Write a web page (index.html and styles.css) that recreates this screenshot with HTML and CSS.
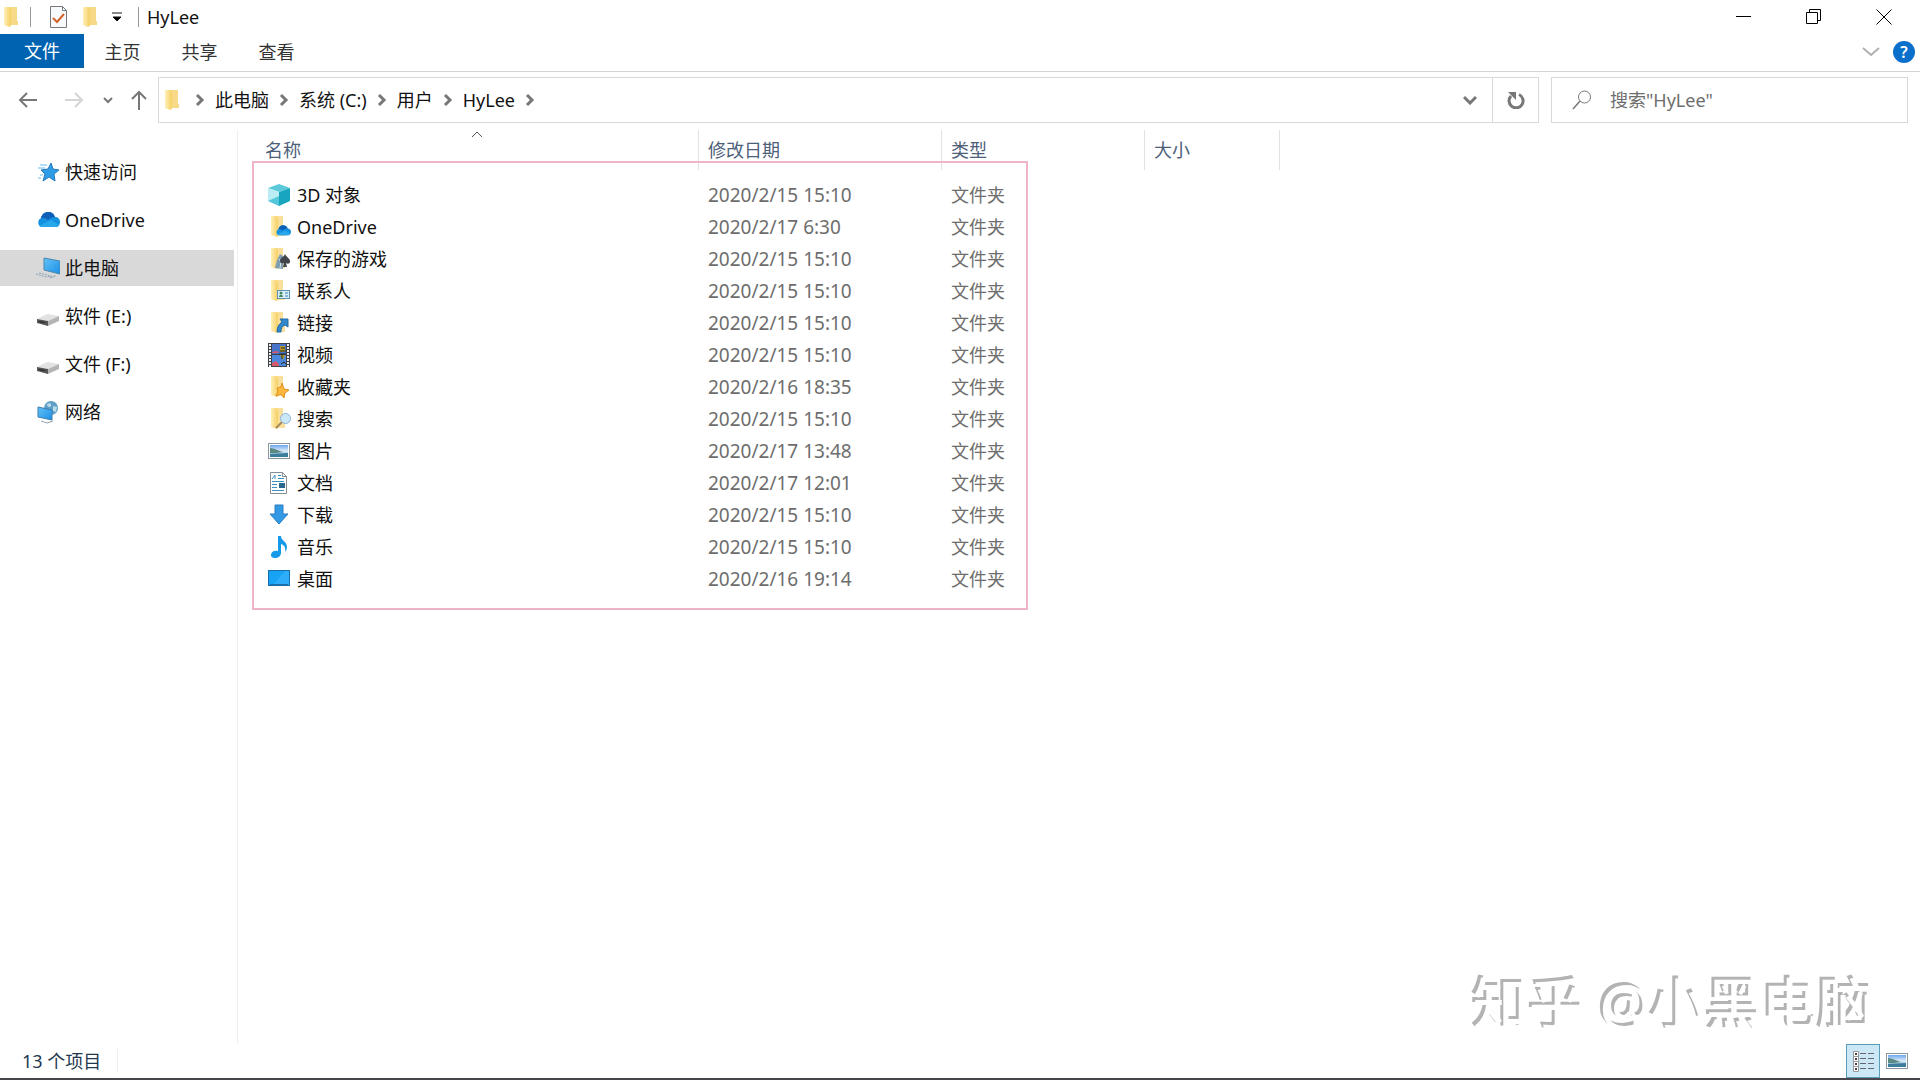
FILE: index.html
```
<!DOCTYPE html>
<html lang="zh-CN">
<head>
    <meta charset="UTF-8">
    <meta name="viewport" content="width=device-width, initial-scale=1.0">
    <title>HyLee</title>
    <link rel="stylesheet" href="styles.css">
</head>
<body>
    <!-- shared icon shapes -->
    <svg class="defs" aria-hidden="true">
        <defs>
            <linearGradient id="gold" x1="0" x2="1"><stop offset="0" stop-color="#fff0b8"/><stop offset="1" stop-color="#f5cf63"/></linearGradient>
            <linearGradient id="screenBlue" x1="0" y1="0" x2="1" y2="1"><stop offset="0" stop-color="#63c2f7"/><stop offset="1" stop-color="#1c8fe6"/></linearGradient>
            <linearGradient id="sky" x1="0" y1="0" x2="0" y2="1"><stop offset="0" stop-color="#6ea6ee"/><stop offset="0.5" stop-color="#dcecf8"/><stop offset="1" stop-color="#4d90b5"/></linearGradient>
        </defs>
        <symbol id="folder" viewBox="0 0 24 24">
            <path d="M8 2h9v14h1v4H8z" fill="#f7d988"/>
            <path d="M4 2h5l2 2v17l-2 1-5-2z" fill="url(#gold)"/>
        </symbol>
        <symbol id="folder-small" viewBox="0 0 24 24">
            <path d="M8 1h8v12h2v8H8z" fill="#fadf9a"/>
            <path d="M4 1h5l2 2v18l-1 1-6-2z" fill="url(#gold)"/>
        </symbol>
        <symbol id="cloud" viewBox="0 0 24 16">
            <path d="M5 15a5 5 0 0 1 0-9C6 2 9 0 12 0c4 0 6 2 7 5 3 0 5 2 5 5s-2 5-4 5z" fill="#1490df"/>
            <path d="M5 6C6 2 9 0 12 0c4 0 6 2 7 5-3 0-5 1-7 3-2-2-4-2-7-2z" fill="#0f5fb8"/>
            <path d="M3 14l12-6 8 5c-1 2-2 2-3 2H5z" fill="#28a8ea"/>
        </symbol>
        <symbol id="drive" viewBox="0 0 24 24">
            <path d="M1 15l10-5 12 2-11 5z" fill="#e2e2e2"/>
            <path d="M1 15l11 2v5L1 19z" fill="#555"/>
            <path d="M12 17l11-5v5l-11 5z" fill="#b5b5b5"/>
            <path d="M3 17l6 1v1l-6-1z" fill="#222"/>
        </symbol>
        <symbol id="picture" viewBox="0 0 24 24">
            <rect x="1.500" y="4.500" width="21" height="15" fill="#fff" stroke="#8b969e"/>
            <rect x="3" y="6" width="18" height="12" fill="url(#sky)"/>
            <path d="M3 9c4 0 9 3 13 4-5 1-9 1-13 1z" fill="#5b8a83"/>
            <path d="M3 15c6 0 12-1 18-1v4H3z" fill="#3d7d9d"/>
        </symbol>
        <symbol id="crumb" viewBox="0 0 10 14">
            <path d="M2 2l5 5-5 5" fill="none" stroke="#777" stroke-width="3"/>
        </symbol>
    </svg>

    <header class="titlebar">
        <svg class="icon" viewBox="0 0 24 24"><use href="#folder"/></svg>
        <span class="rule"></span>
        <button class="quick" aria-label="属性">
            <svg class="icon" viewBox="0 0 24 24"><path d="M3.500 1.500h12l4 4v17h-16z" fill="#f8f9fb" stroke="#75797e"/><path d="M15.500 1.500v4h4" fill="none" stroke="#75797e"/><path d="M6 13l4 4 7-8" fill="none" stroke="#d4622a" stroke-width="2"/></svg>
        </button>
        <button class="quick" aria-label="新建文件夹"><svg class="icon" viewBox="0 0 24 24"><use href="#folder"/></svg></button>
        <button class="more" aria-label="自定义快速访问工具栏">
            <svg width="10" height="10" viewBox="0 0 10 10"><path d="M0 1h10M1 5h8L5 9z" stroke="#111" stroke-width="1"/></svg>
        </button>
        <span class="rule"></span>
        <span class="title">HyLee</span>
        <div class="window-buttons">
            <button aria-label="最小化"><svg viewBox="0 0 16 16"><path d="M0 7.500h15"/></svg></button>
            <button aria-label="向下还原"><svg viewBox="0 0 16 16"><path d="M.5 3.500h11v11H.5zM3.500 3.500v-3h11v11h-3"/></svg></button>
            <button aria-label="关闭"><svg viewBox="0 0 16 16"><path d="M.5.500l15 15M15.500.500l-15 15"/></svg></button>
        </div>
    </header>

    <nav class="ribbon">
        <button class="tab file">文件</button>
        <button class="tab">主页</button>
        <button class="tab">共享</button>
        <button class="tab">查看</button>
        <button class="expand" aria-label="展开功能区"><svg width="18" height="12" viewBox="0 0 18 12"><path d="M1 2l8 7 8-7" fill="none" stroke="#b0b0b0" stroke-width="2"/></svg></button>
        <button class="help" aria-label="帮助">?</button>
    </nav>

    <div class="toolbar">
        <button class="arrow back" aria-label="后退"><svg width="20" height="20" viewBox="0 0 20 20"><path d="M19 10H2M9 3l-7 7 7 7" fill="none" stroke="#777" stroke-width="2"/></svg></button>
        <button class="arrow forward" aria-label="前进"><svg width="20" height="20" viewBox="0 0 20 20"><path d="M1 10h17M11 3l7 7-7 7" fill="none" stroke="#d5d5d5" stroke-width="2"/></svg></button>
        <button class="arrow recent" aria-label="最近浏览的位置"><svg width="10" height="8" viewBox="0 0 10 8"><path d="M1 2l4 4 4-4" fill="none" stroke="#777" stroke-width="2"/></svg></button>
        <button class="arrow up" aria-label="上移"><svg width="16" height="20" viewBox="0 0 16 20"><path d="M8 20V2M1 9l7-7 7 7" fill="none" stroke="#777" stroke-width="2"/></svg></button>
        <div class="address">
            <svg class="icon" viewBox="0 0 24 24"><use href="#folder"/></svg>
            <svg class="crumb"><use href="#crumb"/></svg>
            <a href="#">此电脑</a>
            <svg class="crumb"><use href="#crumb"/></svg>
            <a href="#">系统 (C:)</a>
            <svg class="crumb"><use href="#crumb"/></svg>
            <a href="#">用户</a>
            <svg class="crumb"><use href="#crumb"/></svg>
            <a href="#">HyLee</a>
            <svg class="crumb"><use href="#crumb"/></svg>
            <button class="history" aria-label="以前的位置"><svg width="14" height="10" viewBox="0 0 14 10"><path d="M1 2l6 6 6-6" fill="none" stroke="#777" stroke-width="3"/></svg></button>
            <button class="refresh" aria-label="刷新"><svg width="18" height="18" viewBox="0 0 18 18"><path d="M12 3.500A7 7 0 1 1 4 5" fill="none" stroke="#777" stroke-width="3"/><path d="M1 1h8v8z" fill="#777"/></svg></button>
        </div>
        <label class="search">
            <svg width="20" height="20" viewBox="0 0 20 20"><circle cx="12.500" cy="7" r="6" fill="none" stroke="#777"/><path d="M8 11l-7 8" stroke="#777" stroke-width="1.500"/></svg>
            <input type="text" placeholder="搜索&quot;HyLee&quot;" aria-label="搜索">
        </label>
    </div>

    <div class="content">
        <nav class="sidebar">
            <a href="#"><svg class="icon" viewBox="0 0 24 24"><path d="M15 3l2 6 6 1-5 4 1 7-6-4-6 4 2-7-4-4 7-1z" fill="#2f9ce8" stroke="#2379bd"/><path d="M4 5h7M2 8h7M4 15h3M2 18h3" stroke="#6bbcf0"/></svg>快速访问</a>
            <a href="#"><svg class="icon" viewBox="0 0 24 24"><use href="#cloud" y="4" width="24" height="16"/></svg>OneDrive</a>
            <a href="#" class="selected"><svg class="icon" viewBox="0 0 24 24"><path d="M8 2l16 3v13L8 14z" fill="url(#screenBlue)" stroke="#4b87ad"/><path d="M0 18l10 3 10-1M3 17l12 3M14 22l4-1" fill="none" stroke="#8fa3b1" stroke-dasharray="2 1"/></svg>此电脑</a>
            <a href="#"><svg class="icon" viewBox="0 0 24 24"><use href="#drive"/></svg>软件 (E:)</a>
            <a href="#"><svg class="icon" viewBox="0 0 24 24"><use href="#drive"/></svg>文件 (F:)</a>
            <a href="#"><svg class="icon" viewBox="0 0 24 24"><circle cx="15" cy="8" r="7" fill="#5f9fc6"/><path d="M11 4c3-2 5 0 4 2s-4 1-4-2zM17 6l4 1-1 5-3-1z" fill="#b7dcec"/><path d="M2 7l14 3v10L2 17z" fill="url(#screenBlue)" stroke="#3b7eb0"/><path d="M5 21l6 2 6-2" fill="none" stroke="#91a2ad"/></svg>网络</a>
        </nav>

        <main class="files">
            <div class="listing">
                <table>
                    <colgroup><col class="col-name"><col class="col-date"><col class="col-type"><col class="col-size"></colgroup>
                    <thead>
                        <tr>
                            <th>名称<svg class="sort" viewBox="0 0 12 7"><path d="M1 6l5-5 5 5" fill="none" stroke="#555"/></svg></th>
                            <th>修改日期</th>
                            <th>类型</th>
                            <th>大小</th>
                        </tr>
                    </thead>
                    <tbody>
                        <tr><td><div class="name"><svg class="icon" viewBox="0 0 24 24"><path d="M12 1l11 4-11 4L1 5z" fill="#5cc9da"/><path d="M1 5l11 4v14L1 18z" fill="#b9edf3"/><path d="M23 5L12 9v14l11-5z" fill="#18a5c0"/><path d="M1 18l11-5v10z" fill="#54c8da"/></svg>3D 对象</div></td><td>2020/2/15 15:10</td><td>文件夹</td><td></td></tr>
                        <tr><td><div class="name"><svg class="icon" viewBox="0 0 24 24"><use href="#folder-small"/><use href="#cloud" x="8" y="10" width="16" height="11"/></svg>OneDrive</div></td><td>2020/2/17 6:30</td><td>文件夹</td><td></td></tr>
                        <tr><td><div class="name"><svg class="icon" viewBox="0 0 24 24"><use href="#folder-small"/><path d="M10 13l3-6 3 2v13l-8-1z" fill="#7f9db0"/><path d="M12 12l2 3-1 6" stroke="#d9e6ed" fill="none"/><path d="M18 7c1 3 6 5 5 8 0 2-3 2-4 1l1 4h-4l1-4c-2 1-4 0-4-2 0-3 4-4 5-7z" fill="#41464c"/></svg>保存的游戏</div></td><td>2020/2/15 15:10</td><td>文件夹</td><td></td></tr>
                        <tr><td><div class="name"><svg class="icon" viewBox="0 0 24 24"><use href="#folder-small"/><rect x="10.500" y="11.500" width="12" height="8" fill="#d8eff9" stroke="#5d94b5"/><circle cx="14" cy="14" r="1.500" fill="#46885f"/><path d="M12 18c0-3 4-3 4 0z" fill="#46885f"/><path d="M18 14h3M18 17h3" stroke="#3c83b5"/></svg>联系人</div></td><td>2020/2/15 15:10</td><td>文件夹</td><td></td></tr>
                        <tr><td><div class="name"><svg class="icon" viewBox="0 0 24 24"><use href="#folder-small"/><path d="M13 8h8v8l-3-2c-3 1-4 3-4 7h-4c0-5 2-8 5-10z" fill="#3287cd" stroke="#236aa5"/></svg>链接</div></td><td>2020/2/15 15:10</td><td>文件夹</td><td></td></tr>
                        <tr><td><div class="name"><svg class="icon" viewBox="0 0 24 24"><path d="M1 0h22v24H1z" fill="#3d4147"/><path d="M5 1h14v10H5z" fill="#4774c9"/><path d="M5 12h14v11H5z" fill="#4b87dc"/><path d="M5 9l5-1 2 2H5zM5 20l4-2 3 3v2H5z" fill="#d75868"/><path d="M13 3h5v6h-5zM13 12h5l-2 5z" fill="#b6982d"/><path d="M14 5h4M13 8h6M15 12v4M12 11h7M14 21l3-2 2 2" fill="none" stroke="#272b20"/><path d="M3 1v23M21 1v23" stroke="#f0f0f0" stroke-width="2" stroke-dasharray="2 1"/></svg>视频</div></td><td>2020/2/15 15:10</td><td>文件夹</td><td></td></tr>
                        <tr><td><div class="name"><svg class="icon" viewBox="0 0 24 24"><use href="#folder-small"/><path d="M15 8l2 6 5 1-4 3-1 5-3-4-5 2 2-5-1-3 4-1z" fill="#ffb83d" stroke="#df9123"/></svg>收藏夹</div></td><td>2020/2/16 18:35</td><td>文件夹</td><td></td></tr>
                        <tr><td><div class="name"><svg class="icon" viewBox="0 0 24 24"><use href="#folder-small"/><path d="M15 15l-6 6" stroke="#a48b64" stroke-width="2"/><circle cx="18.500" cy="11.500" r="5" fill="#cce9fb" stroke="#8ab4cf"/></svg>搜索</div></td><td>2020/2/15 15:10</td><td>文件夹</td><td></td></tr>
                        <tr><td><div class="name"><svg class="icon" viewBox="0 0 24 24"><use href="#picture"/></svg>图片</div></td><td>2020/2/17 13:48</td><td>文件夹</td><td></td></tr>
                        <tr><td><div class="name"><svg class="icon" viewBox="0 0 24 24"><path d="M3.500 1.500h12l4 4v17h-16z" fill="#fff" stroke="#868e94"/><path d="M15.500 1.500v4h4" fill="none" stroke="#868e94"/><path d="M5 8l3-4v4M11 4.500h3M11 7.500h6M5 10.500h12M5 13.500h5M5 16.500h5M5 19.500h12" stroke="#3b91c2" fill="none"/><rect x="12" y="12" width="6" height="5" fill="#2b668d"/></svg>文档</div></td><td>2020/2/17 12:01</td><td>文件夹</td><td></td></tr>
                        <tr><td><div class="name"><svg class="icon" viewBox="0 0 24 24"><path d="M8 2h8v9h5l-9 10-9-10h5z" fill="#3399e5" stroke="#2b7fc2"/></svg>下载</div></td><td>2020/2/15 15:10</td><td>文件夹</td><td></td></tr>
                        <tr><td><div class="name"><svg class="icon" viewBox="0 0 24 24"><path d="M11 1h3c0 5 6 5 6 11 0 2-1 4-2 5 1-5-1-7-4-8v9c0 3-3 5-6 5s-4-1-4-3c0-3 3-5 7-4z" fill="#149ae8"/></svg>音乐</div></td><td>2020/2/15 15:10</td><td>文件夹</td><td></td></tr>
                        <tr><td><div class="name"><svg class="icon" viewBox="0 0 24 24"><rect x="1.500" y="3.500" width="21" height="15" fill="#18a2f5" stroke="#176fa9"/><path d="M6 18L18 4h4v14z" fill="#2eaefa"/><path d="M3 17.500h18" stroke="#1c6da6"/></svg>桌面</div></td><td>2020/2/16 19:14</td><td>文件夹</td><td></td></tr>
                    </tbody>
                </table>
                <div class="marker"></div>
            </div>
        </main>
    </div>

    <footer class="statusbar">
        <span class="count">13 个项目</span>
        <div class="views">
            <button class="view active" aria-label="详细信息"><svg width="24" height="24" viewBox="0 0 24 24"><path d="M2.500 2.500h5v20h-5zM2 7.500h6M2 12.500h6M2 17.500h6" fill="#fff" stroke="#999"/><path d="M4 5h2M4 10h2M4 15h2M4 20h2" stroke="#444" stroke-width="2"/><path d="M9 4.500h6M17 4.500h6M9 9.500h6M17 9.500h6M9 14.500h6M17 14.500h6M9 19.500h6M17 19.500h6" stroke="#667"/></svg></button>
            <button class="view" aria-label="大缩略图"><svg class="icon" viewBox="0 0 24 24"><use href="#picture"/></svg></button>
        </div>
    </footer>
    <div class="watermark">知乎 @小黑电脑</div>
</body>
</html>
```
FILE: styles.css
```
* {
    box-sizing: border-box;
}
body {
    margin: 0;
    min-height: 100vh;
    display: flex;
    flex-direction: column;
    position: relative;
    background: #fff;
    color: #111;
    border-bottom: 2px solid #48464a;
    font-family: "Noto Sans", "Noto Sans CJK SC", sans-serif;
    font-size: 18px;
    line-height: 24px;
}
button, input {
    font: inherit;
    color: inherit;
    border: none;
    background: none;
    padding: 0;
}
button {
    display: flex;
    align-items: center;
    justify-content: center;
}
a {
    color: inherit;
    text-decoration: none;
}
svg {
    display: block;
    flex: none;
}
.defs {
    position: absolute;
    width: 0;
    height: 0;
}
.icon {
    width: 24px;
    height: 24px;
}

/* title bar */
.titlebar {
    display: flex;
    align-items: center;
    height: 34px;
}
.rule {
    width: 1px;
    height: 20px;
    background: #999;
}
.titlebar > .icon + .rule {
    margin: 0 16px 0 6px;
}
.quick {
    width: 24px;
    margin-right: 8px;
}
.more {
    width: 10px;
    margin: 0 16px 0 1px;
}
.title {
    margin-left: 8px;
}
.window-buttons {
    display: flex;
    margin-left: auto;
    padding-right: 1px;
}
.window-buttons button {
    width: 70px;
    height: 34px;
}
.window-buttons svg {
    width: 16px;
    height: 16px;
    fill: none;
    stroke: #000;
}

/* ribbon */
.ribbon {
    display: flex;
    height: 38px;
    padding-right: 5px;
    border-bottom: 1px solid #d5d5d5;
}
.tab {
    width: 77px;
    height: 36px;
    color: #333;
}
.tab.file {
    width: 84px;
    height: 34px;
    background: #0063b1;
    color: #fff;
}
.expand {
    width: 40px;
    height: 36px;
    margin-left: auto;
}
.help {
    width: 22px;
    height: 22px;
    margin: 7px 0 0 2px;
    border-radius: 50%;
    background: #0a6fcb;
    color: #fff;
    font-size: 16px;
    font-weight: 600;
}

/* navigation and address */
.toolbar {
    display: flex;
    align-items: center;
    padding: 5px 12px 0 0;
}
.arrow.back {
    margin-left: 18px;
}
.arrow.forward {
    margin-left: 26px;
}
.arrow.recent {
    margin-left: 19px;
}
.arrow.up {
    margin: 0 11px 0 18px;
}
.address {
    flex: 1;
    display: flex;
    align-items: center;
    height: 46px;
    padding-left: 2px;
    border: 1px solid #d9d9d9;
}
.crumb {
    width: 10px;
    height: 14px;
    margin: 0 10px;
}
.history {
    width: 44px;
    height: 44px;
    margin-left: auto;
}
.refresh {
    width: 46px;
    height: 44px;
    border-left: 1px solid #d9d9d9;
}
.search {
    display: flex;
    align-items: center;
    gap: 18px;
    width: 357px;
    height: 46px;
    margin-left: 12px;
    padding: 0 20px;
    border: 1px solid #d9d9d9;
}
.search input {
    flex: 1;
    min-width: 0;
    outline: none;
}
.search input::placeholder {
    color: #6d6d6d;
    opacity: 1;
}

/* panes */
.content {
    flex: 1;
    display: flex;
    padding-top: 7px;
}
.sidebar {
    width: 238px;
    padding: 24px 3px 0 0;
    border-right: 1px solid #eee;
    display: flex;
    flex-direction: column;
    gap: 12px;
}
.sidebar a {
    display: flex;
    align-items: center;
    gap: 5px;
    height: 36px;
    padding-left: 36px;
}
.sidebar .selected {
    background: #d9d9d9;
}
.files {
    flex: 1;
    padding-left: 18px;
}
.listing {
    position: relative;
    width: max-content;
}
table {
    table-layout: fixed;
    width: 1024px;
    border-spacing: 0;
}
.col-name {
    width: 443px;
}
.col-date {
    width: 243px;
}
.col-type {
    width: 203px;
}
.col-size {
    width: 135px;
}
th {
    position: relative;
    height: 40px;
    padding: 0 9px;
    border-right: 1px solid #e2e2e2;
    color: #4c607a;
    font-weight: 400;
    text-align: left;
}
.sort {
    position: absolute;
    top: 1px;
    left: 50%;
    width: 12px;
    height: 7px;
    margin-left: -6px;
}
tbody::before {
    content: "";
    display: block;
    height: 9px;
}
td {
    height: 32px;
    padding: 0 9px;
    color: #6d6d6d;
}
td:first-child {
    padding-left: 11px;
    color: #111;
}
td:nth-child(2) {
    font-size: 19px;
}
.name {
    display: flex;
    align-items: center;
    gap: 6px;
}
/* pink frame drawn around the user folders */
.marker {
    position: absolute;
    top: 31px;
    left: -4px;
    width: 776px;
    height: 449px;
    border: 2px solid #efb4c8;
    pointer-events: none;
}

/* status bar */
.statusbar {
    display: flex;
    align-items: center;
    height: 34px;
    color: #23374f;
}
.count {
    padding: 0 16px 0 22px;
    border-right: 1px solid #f0f0f0;
}
.views {
    display: flex;
    margin-left: auto;
    padding-right: 6px;
}
.view {
    width: 34px;
    height: 34px;
}
.view.active {
    border: 1px solid #5a9bb8;
    background: #cce8f6;
}

.watermark {
    position: absolute;
    right: 46px;
    bottom: 36px;
    color: #fff;
    font-size: 56px;
    font-weight: 500;
    line-height: 78px;
    text-shadow: -3px -3px 0 #b3b3b3;
}
```
